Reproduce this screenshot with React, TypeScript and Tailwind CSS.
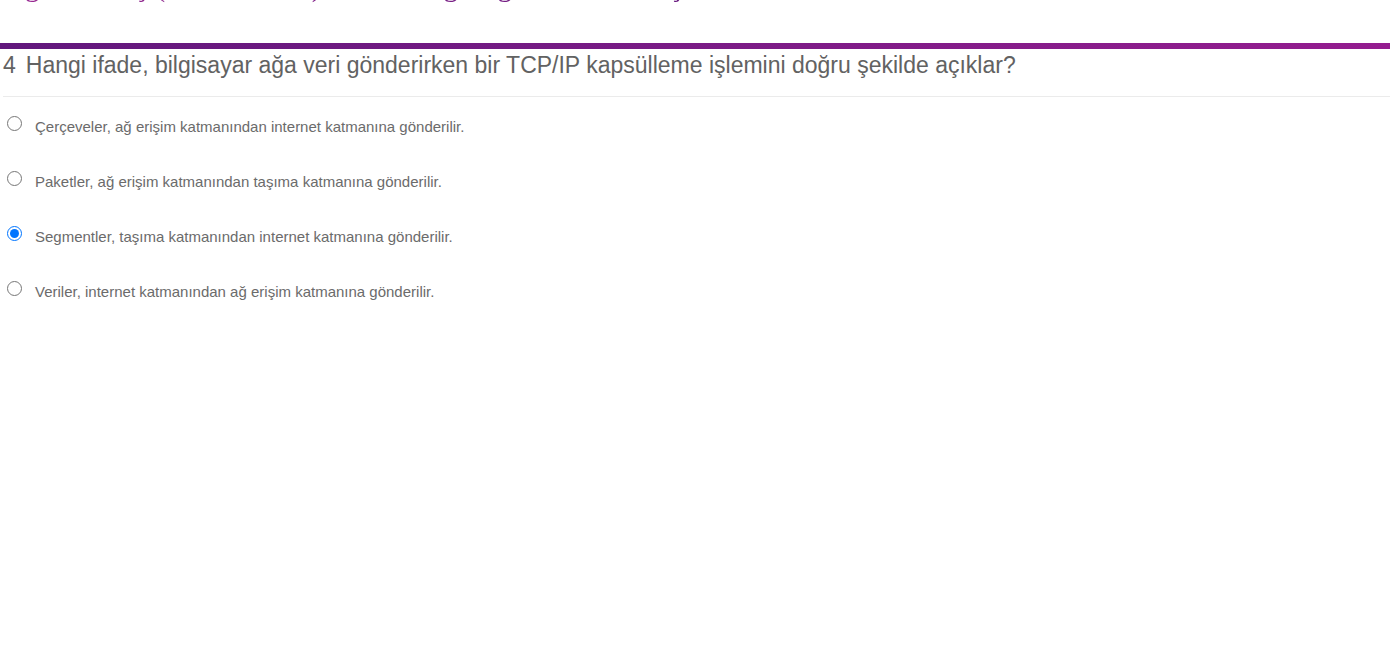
import { useState } from 'react';

const answers = [
  'Çerçeveler, ağ erişim katmanından internet katmanına gönderilir.',
  'Paketler, ağ erişim katmanından taşıma katmanına gönderilir.',
  'Segmentler, taşıma katmanından internet katmanına gönderilir.',
  'Veriler, internet katmanından ağ erişim katmanına gönderilir.',
];

export default function App() {
  const [selected, setSelected] = useState(2);

  return (
    <main className="min-h-screen overflow-hidden bg-white font-['Liberation_Sans',Arial,sans-serif]">
      <header className="-mt-8">
        <h1 className="w-fit bg-linear-to-r from-[#9a2a92] to-[#61177c] bg-clip-text px-1 pb-[39px] font-['Liberation_Serif','Times_New_Roman',serif] text-[29px] leading-9 whitespace-nowrap text-transparent">
          Ağlara Giriş (Version 7.00) - Temel Ağ Bağlantısı ve İletişim Sınavı
        </h1>
        <div className="h-1.5 bg-linear-to-r from-[#61177c] to-[#941c8f]" />
      </header>
      <form className="pl-[3px]">
        <fieldset>
          <legend className="flex w-full gap-2.5 border-b border-[#ebebeb] pb-[15px] text-[23px] leading-8 text-[#626262]">
            <span>4</span>
            <span>Hangi ifade, bilgisayar ağa veri gönderirken bir TCP/IP kapsülleme işlemini doğru şekilde açıklar?</span>
          </legend>
          <div className="flex flex-col gap-[31px] px-1 pt-[18px]">
            {answers.map((answer, index) => (
              <label key={answer} className="flex items-start gap-[13px] text-[15px] leading-6 text-[#6b6b6b]">
                <input
                  type="radio"
                  name="answer"
                  checked={selected === index}
                  onChange={() => setSelected(index)}
                  className="my-px size-[15px] shrink-0 accent-[#0075ff]"
                />
                <span>{answer}</span>
              </label>
            ))}
          </div>
        </fieldset>
      </form>
    </main>
  );
}
